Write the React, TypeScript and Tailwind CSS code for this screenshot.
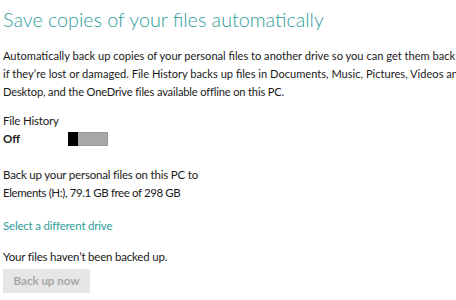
import React from "react";

export default function App() {
  return (
    <div className="w-[456px] h-[300px] overflow-hidden bg-white text-[#1a1a1a] font-['Lato',sans-serif]">
      <div className="pl-[3px] w-[600px]">
        <h1 className="pt-[6px] text-[19.7px] leading-[28px] font-light text-[#2e9e9b] whitespace-nowrap">
          Save copies of your files automatically
        </h1>
        <div className="mt-[13px] text-[11.1px] leading-[18px] whitespace-nowrap">
          <p>Automatically back up copies of your personal files to another drive so you can get them back</p>
          <p>if they’re lost or damaged. File History backs up files in Documents, Music, Pictures, Videos and</p>
          <p className="tracking-[-0.15px]">Desktop, and the OneDrive files available offline on this PC.</p>
        </div>
        <div className="mt-[11px] text-[11.5px] leading-[18px] tracking-[-0.2px]">File History</div>
        <div className="flex items-center h-[18px] text-[11.5px] leading-[18px]">
          <span className="w-[65px] font-bold">Off</span>
          <div className="flex w-[40px] h-[14px] border border-[#9a9a9a] bg-[#a8a8a8]">
            <div className="-my-px -ml-px h-[14px] w-[10px] bg-black" />
          </div>
        </div>
        <div className="mt-[18px] text-[11.5px] leading-[18px] tracking-[-0.2px]">
          <p>Back up your personal files on this PC to</p>
          <p className="tracking-[-0.4px]">Elements (H:), 79.1 GB free of 298 GB</p>
        </div>
        <div className="mt-[15px] text-[11.5px] leading-[18px] tracking-[-0.2px] text-[#2e9e9b]">
          Select a different drive
        </div>
        <div className="mt-[13px] text-[11.5px] leading-[18px] tracking-[-0.2px]">
          Your files haven’t been backed up.
        </div>
        <button className="mt-[3px] w-[87px] h-[24px] bg-[#e6e6e6] text-[#a6a6a6] text-[11.5px] font-bold">
          Back up now
        </button>
      </div>
    </div>
  );
}
